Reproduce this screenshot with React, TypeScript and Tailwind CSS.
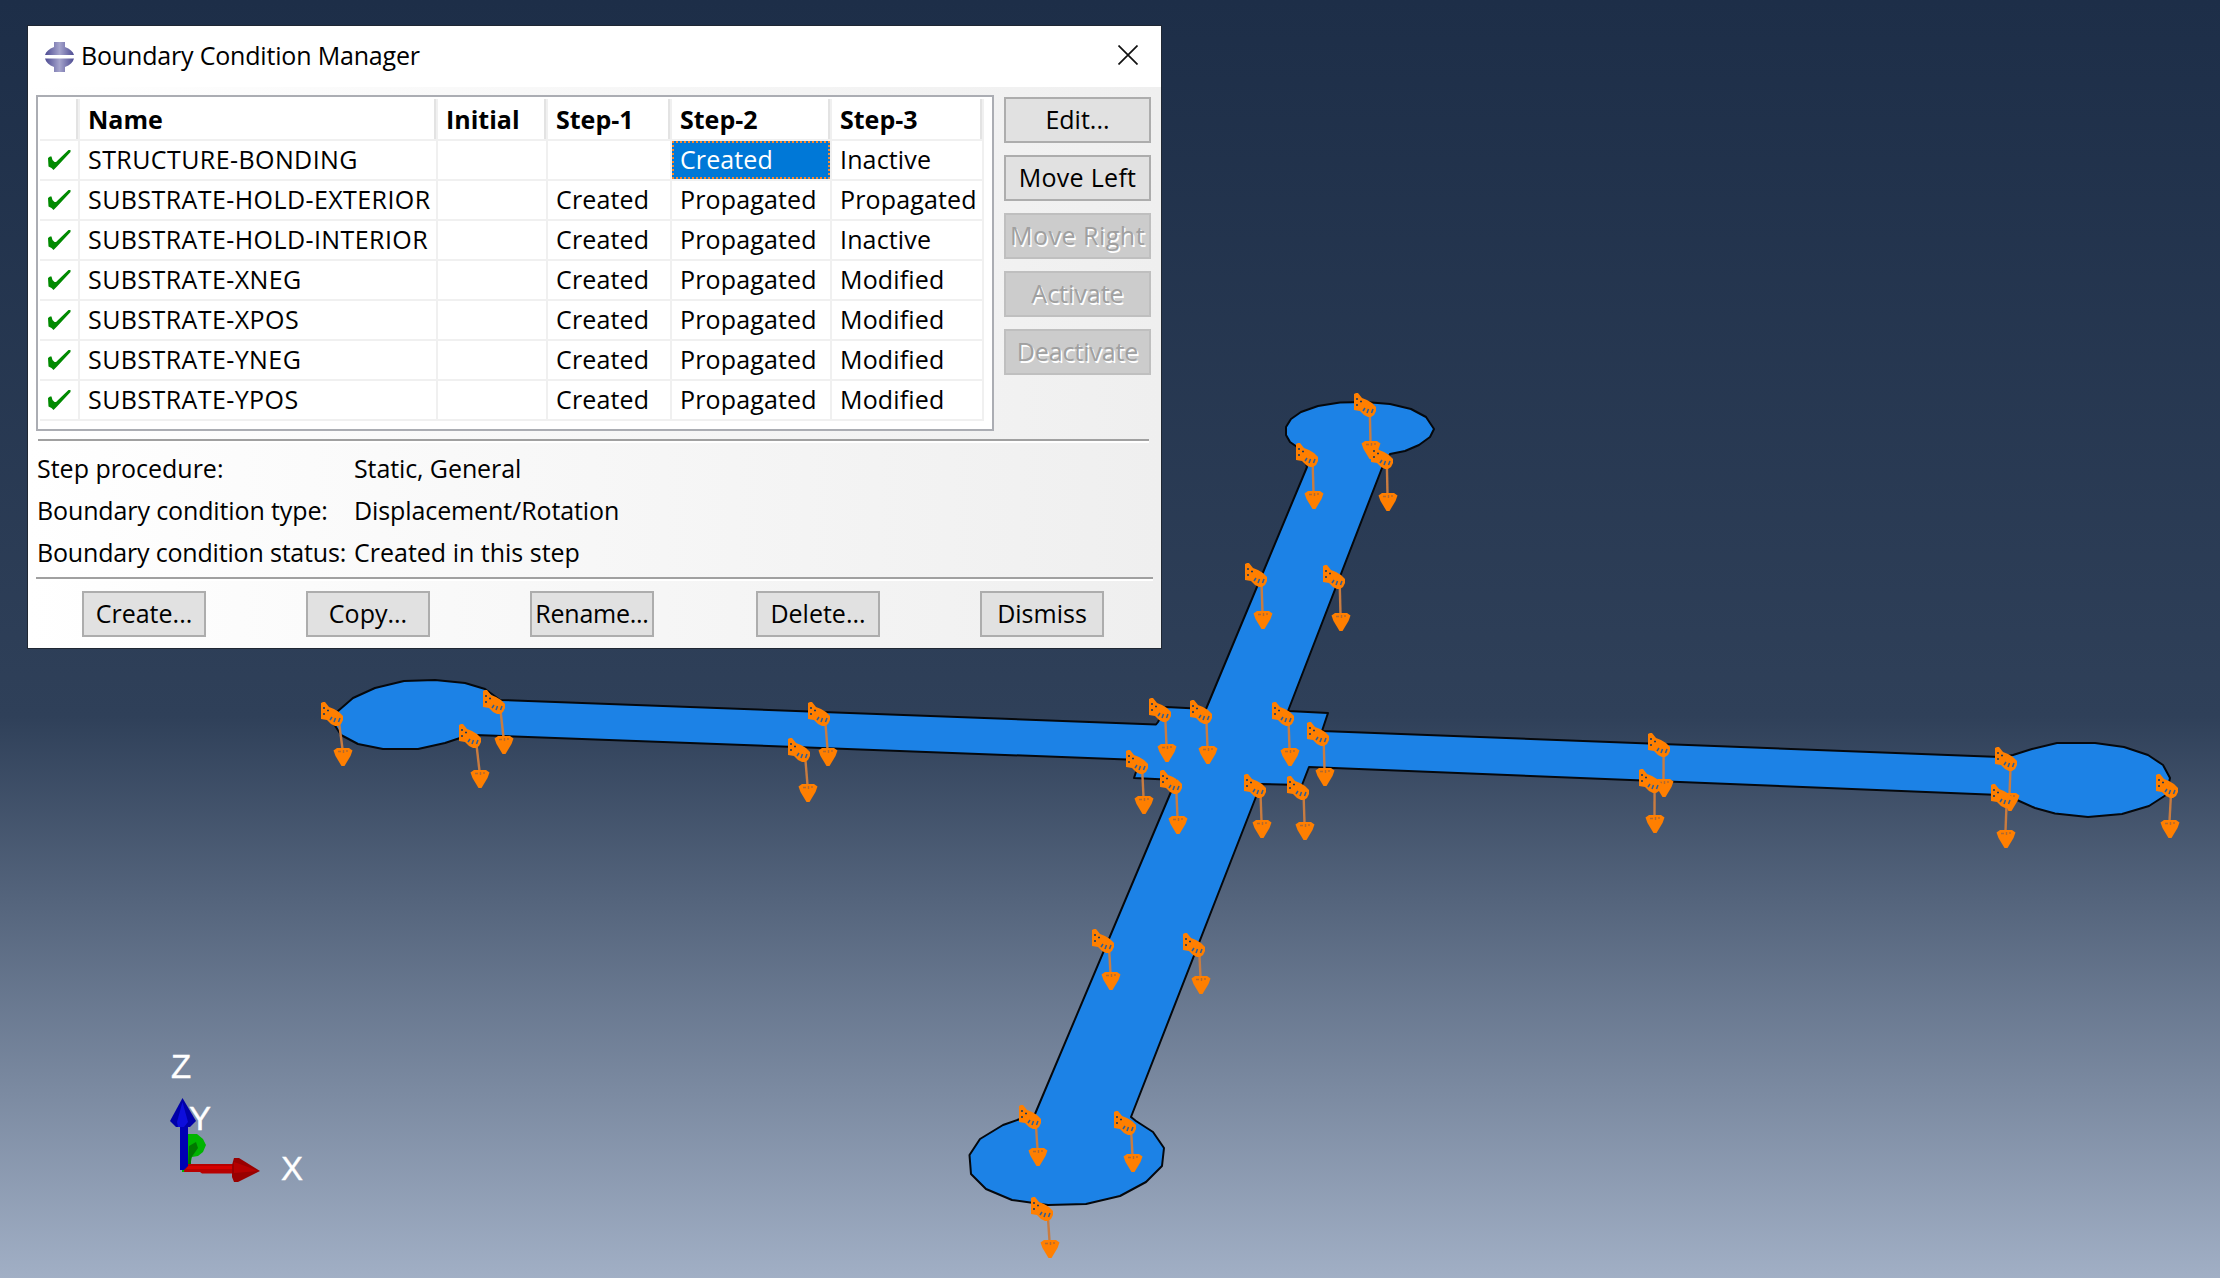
import type { ReactNode } from "react";

type Row = { name: string; cells: [string, string, string, string] };

const ROWS: Row[] = [
  { name: "STRUCTURE-BONDING", cells: ["", "", "Created", "Inactive"] },
  { name: "SUBSTRATE-HOLD-EXTERIOR", cells: ["", "Created", "Propagated", "Propagated"] },
  { name: "SUBSTRATE-HOLD-INTERIOR", cells: ["", "Created", "Propagated", "Inactive"] },
  { name: "SUBSTRATE-XNEG", cells: ["", "Created", "Propagated", "Modified"] },
  { name: "SUBSTRATE-XPOS", cells: ["", "Created", "Propagated", "Modified"] },
  { name: "SUBSTRATE-YNEG", cells: ["", "Created", "Propagated", "Modified"] },
  { name: "SUBSTRATE-YPOS", cells: ["", "Created", "Propagated", "Modified"] },
];

const HEADERS = ["", "Name", "Initial", "Step-1", "Step-2", "Step-3"];

const GRID = "grid grid-cols-[40px_358px_110px_124px_160px_152px]";

// Tips of the downward arrows of the boundary-condition symbols.
const SYMBOLS: [number, number][] = [
  [1371, 459], [1314, 509], [1388, 511], [1263, 629], [1341, 631],
  [1167, 762], [1208, 764], [1290, 766], [1325, 786],
  [1144, 814], [1178, 834], [1262, 838], [1305, 840],
  [343, 766], [480, 788], [504, 754], [828, 766], [808, 802],
  [1664, 797], [1655, 833], [2010, 811], [2006, 848], [2170, 838],
  [1111, 990], [1201, 994], [1038, 1166], [1133, 1172], [1050, 1258],
];

function Symbol({ x, y }: { x: number; y: number }) {
  // The view's perspective turns each symbol slightly from left to right
  // and shortens it towards the bottom.
  const turn = (x - 343) / 1827;
  const bodyX = Math.round(-22 + turn * 8);
  const bodyY = y < 650 ? -66 : y < 900 ? -64 : -61;
  return (
    <g transform={`translate(${x} ${y})`}>
      <path d={`M${-4 + turn * 5} ${bodyY + 20}L-0.5 -17`} stroke="#c97c40" strokeWidth="2.4" fill="none" />
      <path d="M-9.5 -15.5L-6 -18H6L9.5 -15.5L7.5 -10L1.5 0H-1.5L-7.5 -10Z" fill="#ff7f00" />
      <path d="M-5 -14.5H-2M0.500 -16V-13M4 -16V-14" stroke="#b06a30" strokeWidth="1.4" fill="none" />
      <g transform={`translate(${bodyX} ${bodyY})`}>
        <path d="M0 1L2 0H4L8 5L13 7L18 10L22 14V18L20 22L17 24H14L10 22L6 18L0 17Z" fill="#ff7f00" />
        <path d="M3 5V7M3 11V13M6 8.500H8" stroke="#1c3a5c" strokeWidth="1.6" fill="none" />
        <path d="M9 18L11 15M13 20L14.500 16M17.500 20L19 16" stroke="#2b5f98" strokeWidth="1.5" fill="none" />
      </g>
    </g>
  );
}

function Viewport() {
  return (
    <svg className="absolute inset-0" width="2220" height="1278" viewBox="0 0 2220 1278">
      <g fill="#1c82e6" stroke="#05080c" strokeWidth="2" strokeLinejoin="round">
        <path
          d="M1307 467L1300 449L1290 442L1286 435L1286 427L1291 419L1301 412L1318 406L1340 402.500L1365 402L1390 404L1411 409L1426 417L1434 429L1430 437L1419 445L1405 451L1390 454L1382 468
             L1288 711L1328 713L1322 731L2000 757L2013 755L2032 749L2057 743L2095 743L2124 747L2148 755L2163 765L2170 778L2166 795L2149 806L2122 814L2088 817L2055 813.500L2035 808L2017 800L2000 795
             L1309 767L1302 785L1261 784L1131 1117L1136 1121L1153 1132L1164 1148L1162 1166L1146 1182L1120 1196L1086 1204L1048 1205L1012 1200L986 1189L971 1174L969.500 1155L980 1139L1003 1125L1020 1119L1035 1114
             L1176 780L1134 778L1140 760L475 735L460 738L445 743L418 749L383 749L358 744L341 735L334 724L338 711L353 698L375 688L404 681L435 680L465 683L485 689L500 700
             L1156 724.500L1158 722L1166 707L1206 709Z"
        />
      </g>
      {SYMBOLS.map(([x, y]) => (
        <Symbol key={`${x}-${y}`} x={x} y={y} />
      ))}
      <g>
        <path d="M188 1134H197L203 1139L206 1145L203 1152L198 1156L192 1157L190 1166H186Z" fill="#00b400" />
        <path d="M189 1146L196 1142L198 1148L191 1158V1165H188Z" fill="#007800" />
        <path d="M182 1169H185V1172H182Z" fill="#00b400" />
        <path d="M185 1164H235V1173.500H202L200 1172H184Z" fill="#b80000" />
        <path d="M188 1166H234V1169H186Z" fill="#d60000" />
        <path d="M234 1158H239L260 1171L238 1182H234L232 1177V1165Z" fill="#990000" />
        <path d="M234 1162L248 1167L258 1171L234 1173Z" fill="#b50000" />
        <path d="M180 1124H188V1166L184 1170H180Z" fill="#0000b4" />
        <path d="M182.500 1098L196 1121L190 1127H176L170 1121Z" fill="#0000a8" />
        <path d="M182.500 1102L188 1122L184 1127H178L177 1122Z" fill="#0d0ddc" />
      </g>
      <g fill="#ffffff" stroke="#ffffff" strokeWidth="0.4" fontSize="33" textAnchor="middle" fontFamily='"Liberation Sans", sans-serif'>
        <text x="181" y="1078">Z</text>
        <text x="200" y="1129.500">Y</text>
        <text x="292" y="1180">X</text>
      </g>
    </svg>
  );
}

function AppIcon() {
  return (
    <svg className="ml-[17px] h-[30px] w-[29px] shrink-0" viewBox="0 0 29 30">
      <defs>
        <linearGradient id="metal" x1="0" x2="1">
          <stop offset="0" stopColor="#4d4b92" />
          <stop offset="0.5" stopColor="#a5a4cc" />
          <stop offset="1" stopColor="#4d4b92" />
        </linearGradient>
      </defs>
      <path d="M9 0H20V5C25 7 28 9.500 29 13H0C1 9.500 4 7 9 5Z" fill="url(#metal)" />
      <path d="M0 16.500H29C28 20.500 25 23 20 25V30H9V25C4 23 1 20.500 0 16.500Z" fill="url(#metal)" />
    </svg>
  );
}

function Check() {
  return (
    <svg className="ml-2 h-5 w-[23px]" viewBox="0 0 23 20">
      <path d="M0 8L2 6.500H3.500L4.500 10L6.500 12H8L20.500 0H22.500V2L9 16.500L5.500 20L3.500 18L0.500 16.500Z" fill="#008a00" />
    </svg>
  );
}

function Button({ children, className, disabled = false }: { children: ReactNode; className: string; disabled?: boolean }) {
  const tone = disabled
    ? "border-[#bfbfbf] bg-[#cccccc] text-[#a0a0a0] [text-shadow:1.5px_1.5px_0_#ffffff]"
    : "border-[#adadad] bg-[#e1e1e1] text-black";
  return (
    <button
      type="button"
      disabled={disabled}
      className={`flex h-[46px] shrink-0 items-center justify-center border-2 pb-px whitespace-nowrap ${tone} ${className}`}
    >
      {children}
    </button>
  );
}

function ConditionTable() {
  return (
    <div className="h-[336px] w-[958px] border-2 border-[#abadb3] bg-white pt-0.5 pl-0.5">
      <div className={`${GRID} h-[42px] w-[944px] border-b-2 border-[#f0f0f0]`}>
        {HEADERS.map((h, i) => (
          <div key={i} className="flex border-r-2 border-[#f0f0f0]">
            <div className="flex h-10 flex-1 items-center border-r-2 border-[#e3e3e3] pl-2 text-[25px] leading-none font-bold">
              {h}
            </div>
          </div>
        ))}
      </div>
      {ROWS.map((row, r) => (
        <div key={row.name} className={`${GRID} h-10 w-[944px] border-b-2 border-[#f0f0f0]`}>
          <div className="flex items-center border-r-2 border-[#f0f0f0]">
            <Check />
          </div>
          <div className="flex items-center border-r-2 border-[#f0f0f0] pb-0.5 pl-2 tracking-[0.42px] whitespace-nowrap">{row.name}</div>
          {row.cells.map((c, i) =>
            r === 0 && i === 2 ? (
              <div key={i} className="border-r-2 border-[#f0f0f0]">
                <div className="flex h-[38px] items-center border-2 border-dotted border-[#ff8728] bg-[#0078d7] pb-0.5 pl-[6px] tracking-[0.1px] text-white">
                  {c}
                </div>
              </div>
            ) : (
              <div key={i} className="flex items-center border-r-2 border-[#f0f0f0] pb-0.5 pl-2 tracking-[0.15px]">
                {c}
              </div>
            ),
          )}
        </div>
      ))}
    </div>
  );
}

function Dialog() {
  return (
    <section className="relative flex h-[622px] w-[1133px] flex-col bg-linear-to-r from-white to-[#efefef] outline-1 outline-[#1f2733]">
      <header className="flex h-[61px] shrink-0 items-center bg-white">
        <AppIcon />
        <h1 className="ml-[7px] flex-1 pb-0.5 text-[25px] tracking-[-0.18px]">Boundary Condition Manager</h1>
        <svg className="mr-[23px] mb-1 h-5 w-5" viewBox="0 0 20 20">
          <path d="M0.500 0.500L19.500 19.500M19.500 0.500L0.500 19.500" stroke="#111" strokeWidth="1.7" />
        </svg>
      </header>
      <div className="flex gap-[10px] pt-2 pl-2">
        <ConditionTable />
        <div className="flex flex-col gap-3 pt-0.5">
          <Button className="w-[147px]">Edit...</Button>
          <Button className="w-[147px] tracking-[0.3px]">Move Left</Button>
          <Button className="w-[147px] tracking-[0.5px]" disabled>Move Right</Button>
          <Button className="w-[147px]" disabled>Activate</Button>
          <Button className="w-[147px] tracking-[-0.1px]" disabled>Deactivate</Button>
        </div>
      </div>
      <div className="mt-2 ml-[10px] h-1 w-[1111px] border-t-2 border-b-2 border-t-[#a0a0a0] border-b-white" />
      <dl className="mt-[4px] ml-[9px] grid auto-rows-[42px] grid-cols-[317px_1fr] items-center whitespace-nowrap">
        <dt>Step procedure:</dt>
        <dd className="tracking-[-0.1px]">Static, General</dd>
        <dt className="tracking-[-0.12px]">Boundary condition type:</dt>
        <dd className="tracking-[-0.1px]">Displacement/Rotation</dd>
        <dt className="tracking-[-0.18px]">Boundary condition status:</dt>
        <dd>Created in this step</dd>
      </dl>
      <div className="mt-1 ml-2 h-1 w-[1117px] shrink-0 border-t-2 border-b-2 border-t-[#a0a0a0] border-b-white" />
      <footer className="mt-[10px] ml-[54px] flex gap-[100px]">
        <Button className="w-[124px]">Create...</Button>
        <Button className="w-[124px]">Copy...</Button>
        <Button className="mr-0.5 w-[124px] tracking-[-0.25px]">Rename...</Button>
        <Button className="w-[124px]">Delete...</Button>
        <Button className="w-[124px]">Dismiss</Button>
      </footer>
    </section>
  );
}

export default function App() {
  return (
    <main className="relative h-[1278px] w-[2220px] overflow-hidden bg-[linear-gradient(180deg,#1d2e48_0%,#2f4059_56%,#a1afc5_100%)] pt-[26px] pl-7 font-['Open_Sans','Noto_Sans',sans-serif] text-[25px] leading-none text-black">
      <Viewport />
      <Dialog />
    </main>
  );
}
